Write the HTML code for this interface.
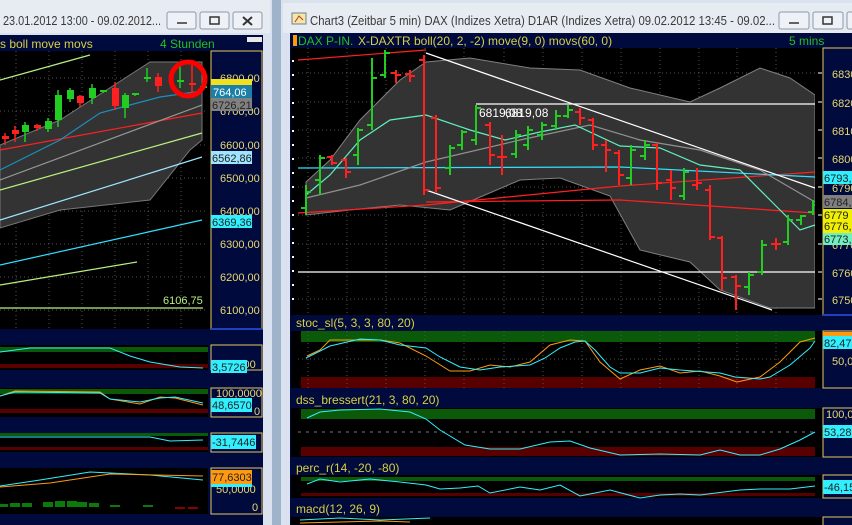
<!DOCTYPE html>
<html><head><meta charset="utf-8"><style>
html,body{margin:0;padding:0;background:#cfd9e6;overflow:hidden;width:852px;height:525px}
svg{display:block;font-family:"Liberation Sans",sans-serif}
</style></head><body>
<svg width="852" height="525" viewBox="0 0 852 525" xmlns="http://www.w3.org/2000/svg">
<rect x="0" y="0" width="272" height="525" fill="#d9e2ee"/>
<rect x="272" y="0" width="9" height="525" fill="#9fb3cb"/>
<rect x="281" y="0" width="571" height="525" fill="#d9e2ee"/>
<rect x="0" y="0" width="270" height="33" fill="#e7ecf3"/>
<rect x="283" y="3" width="569" height="30" fill="#e7ecf3"/>
<text x="3" y="25" font-size="13" fill="#3a3a3a" textLength="158" lengthAdjust="spacingAndGlyphs">23.01.2012 13:00 - 09.02.2012...</text>
<g fill="#eef2f7" stroke="#8c98a8"><rect x="167" y="12" width="29" height="17" rx="2"/><rect x="200" y="12" width="29" height="17" rx="2"/><rect x="233" y="12" width="29" height="17" rx="2"/>
<rect x="779" y="12" width="30" height="17" rx="2"/><rect x="813" y="12" width="30" height="17" rx="2"/><rect x="847" y="12" width="20" height="17" rx="2"/></g>
<g stroke="#333" fill="none" stroke-width="1.5"><path d="M177 23H187"/><rect x="210" y="17" width="9" height="7"/><path d="M243 17L252 25M252 17L243 25" stroke-width="2"/><path d="M789 23H799"/><rect x="823" y="17" width="9" height="7"/></g>
<rect x="292" y="13" width="14" height="11" fill="#f5e6a0" stroke="#6a7ea0"/><path d="M295 22L299 16L303 20" stroke="#c03030" fill="none"/>
<text x="310" y="25" font-size="13" fill="#3a3a3a" textLength="465" lengthAdjust="spacingAndGlyphs">Chart3 (Zeitbar 5 min)  DAX (Indizes Xetra) D1AR (Indizes Xetra) 09.02.2012 13:45 - 09.02...</text>

<rect x="0" y="35" width="263" height="490" fill="#000a3c"/>
<text x="0" y="48" font-size="12" fill="#d8d040">s boll move movs</text>
<text x="160" y="48" font-size="12" fill="#22c022">4 Stunden</text>
<rect x="247" y="37" width="15" height="5" fill="#e8e8e8"/>
<rect x="0" y="51" width="211" height="278" fill="#000"/>
<g stroke="#555" stroke-dasharray="1,3"><path d="M16 51V329M49 51V329M82 51V329M115 51V329M148 51V329M181 51V329M0 78H205M0 111H205M0 145H205M0 178H205M0 211H205M0 244H205M0 277H205M0 310H205"/></g>
<path d="M0 145L60 120L150 62L202 62V140L190 150L150 200L60 210L0 228Z" fill="#333" stroke="#777"/>
<g fill="none" stroke-width="1.2">
<path d="M0 80L90 55" stroke="#b8f080"/>
<path d="M0 150L202 113" stroke="#ff2020"/>
<path d="M0 190L202 133" stroke="#b8f080"/>
<path d="M0 180L202 105" stroke="#999"/>
<path d="M0 220L202 157" stroke="#9ee6ff"/>
<path d="M0 265L202 220" stroke="#30e0ff"/>
<path d="M0 285L137 262" stroke="#b8f080"/>
<path d="M0 170L60 140L100 113L160 97L202 91" stroke="#1a90c0"/>
<path d="M0 308H203" stroke="#b8f080"/>
</g>
<text x="163" y="304" font-size="11" fill="#b8f080">6106,75</text>
<g stroke="#22cc22" stroke-width="1.5"><path d="M25 122V142M48 118V132M58 90V127M70 88V102M92 84V104M103 90V93M125 93V118M135 93V96M147 68V82M180 65V88M203 86V89"/></g>
<g fill="#22cc22"><rect x="22" y="125" width="7" height="7"/><rect x="45" y="121" width="7" height="8"/><rect x="55" y="95" width="7" height="25"/><rect x="67" y="90" width="7" height="9"/><rect x="89" y="88" width="7" height="10"/><rect x="100" y="90" width="7" height="2"/><rect x="122" y="95" width="7" height="13"/><rect x="132" y="93" width="7" height="2"/><rect x="144" y="77" width="7" height="2"/><rect x="177" y="80" width="7" height="2"/><rect x="200" y="86" width="7" height="2"/></g>
<g stroke="#ff2020" stroke-width="1.5"><path d="M5 133V145M15 126V142M37 124V131M80 95V107M115 82V110M158 73V92M192 65V97"/></g>
<g fill="#ff2020"><rect x="2" y="136" width="7" height="3"/><rect x="12" y="130" width="7" height="4"/><rect x="34" y="125" width="7" height="3"/><rect x="77" y="96" width="7" height="7"/><rect x="112" y="88" width="7" height="18"/><rect x="155" y="77" width="7" height="9"/><rect x="189" y="83" width="7" height="2"/></g>
<circle cx="188" cy="79" r="17" fill="none" stroke="#ff0000" stroke-width="5"/>
<rect x="211" y="51" width="51" height="278" fill="#000a3c" stroke="#e8c860"/>
<path d="M211 329H262" stroke="#2040c0" stroke-width="2"/>
<g font-size="11" fill="#e8d870"><text x="220" y="82">6800,00</text><text x="220" y="115">6700,00</text><text x="220" y="149">6600,00</text><text x="220" y="182">6500,00</text><text x="220" y="215">6400,00</text><text x="220" y="248">6300,00</text><text x="220" y="281">6200,00</text><text x="220" y="314">6100,00</text></g>
<rect x="211" y="79" width="41" height="6" fill="#f0e020"/>
<rect x="211" y="85" width="41" height="13" fill="#1a80a8"/><text x="213" y="96" font-size="11" fill="#fff">764,06</text>
<rect x="211" y="98" width="41" height="13" fill="#808080"/><text x="212" y="109" font-size="11" fill="#222">6726,21</text>
<rect x="211" y="151" width="41" height="13" fill="#9ee6ff"/><text x="212" y="162" font-size="11" fill="#222">6562,86</text>
<rect x="211" y="215" width="41" height="13" fill="#30f0ff"/><text x="212" y="226" font-size="11" fill="#222">6369,36</text>
<rect x="0" y="345" width="208" height="25" fill="#000"/>
<rect x="0" y="347" width="208" height="5" fill="#0a5a0a"/><rect x="0" y="364" width="208" height="4" fill="#580000"/>
<path d="M0 352L30 348L110 348L130 356L150 362L180 367L203 368" stroke="#30f0ff" fill="none"/>
<rect x="211" y="345" width="51" height="25" fill="#000a3c" stroke="#e8c860"/>
<text x="216" y="368" font-size="11" fill="#e8d870">50,0000</text>
<rect x="211" y="360" width="36" height="13" fill="#30f0ff"/><text x="212" y="371" font-size="11" fill="#222">3,5726</text>

<rect x="0" y="388" width="208" height="29" fill="#000"/>
<rect x="0" y="389" width="208" height="5" fill="#0a5a0a"/><rect x="0" y="409" width="208" height="4" fill="#580000"/>
<path d="M0 396L15 391L100 392L110 399L140 404L160 397L175 398L203 405" stroke="#ff9a10" fill="none"/>
<path d="M0 396L15 392L100 393L110 399L140 402L160 398L175 397L203 403" stroke="#30f0ff" fill="none"/>
<rect x="211" y="388" width="51" height="29" fill="#000a3c" stroke="#e8c860"/>
<text x="216" y="397" font-size="11" fill="#e8d870">100,0000</text><text x="254" y="415" font-size="11" fill="#e8d870">0</text>
<rect x="211" y="398" width="41" height="14" fill="#30f0ff"/><text x="212" y="409" font-size="11" fill="#222">48,6570</text>

<rect x="0" y="433" width="208" height="19" fill="#000"/>
<rect x="0" y="433" width="208" height="3" fill="#0a5a0a"/><rect x="0" y="447" width="208" height="3" fill="#580000"/>
<path d="M0 437L150 437L170 441L203 440" stroke="#30f0ff" fill="none"/>
<rect x="211" y="433" width="51" height="19" fill="#000a3c" stroke="#e8c860"/>
<rect x="211" y="435" width="45" height="14" fill="#30f0ff"/><text x="212" y="446" font-size="11" fill="#222">-31,7446</text>

<rect x="0" y="468" width="208" height="46" fill="#000"/>
<path d="M0 486L40 480L90 472L150 475L203 480" stroke="#30f0ff" fill="none"/>
<path d="M0 487L50 483L110 474L203 476" stroke="#ff9a10" fill="none"/>
<g fill="#0a7a0a"><rect x="0" y="504" width="8" height="3"/><rect x="10" y="503" width="10" height="4"/><rect x="22" y="503" width="10" height="4"/><rect x="43" y="502" width="10" height="5"/><rect x="55" y="501" width="10" height="6"/><rect x="67" y="501" width="10" height="6"/><rect x="77" y="502" width="10" height="5"/><rect x="89" y="503" width="10" height="4"/><rect x="110" y="505" width="10" height="2"/><rect x="143" y="505" width="10" height="2"/></g>
<g fill="#8a0000"><rect x="175" y="507" width="10" height="2"/><rect x="188" y="507" width="10" height="2"/></g>
<rect x="211" y="468" width="51" height="46" fill="#000a3c" stroke="#e8c860"/>
<text x="216" y="493" font-size="11" fill="#e8d870">50,0000</text><text x="252" y="511" font-size="11" fill="#e8d870">0</text>
<rect x="211" y="470" width="41" height="14" fill="#ff9a10"/><text x="212" y="481" font-size="11" fill="#222">77,6303</text>
<rect x="211" y="484" width="41" height="3" fill="#30f0ff"/>

<rect x="290" y="33" width="562" height="492" fill="#000a3c"/>
<rect x="293" y="35" width="4" height="11" fill="#ff9a10"/>
<text x="298" y="45" font-size="12" fill="#22c022">DAX P-IN.</text>
<text x="358" y="45" font-size="12" fill="#d8d040">X-DAXTR boll(20, 2, -2) move(9, 0) movs(60, 0)</text>
<text x="789" y="45" font-size="12" fill="#22c022">5 mins</text>
<rect x="291" y="48" width="531" height="267" fill="#000"/>
<g stroke="#555" stroke-dasharray="1,3"><path d="M308 48V315M347 48V315M386 48V315M425 48V315M464 48V315M504 48V315M543 48V315M582 48V315M621 48V315M660 48V315M699 48V315M737 48V315M776 48V315M298 73H815M298 102H815M298 130H815M298 158H815M298 187H815M298 215H815M298 244H815M298 299H815"/></g>
<g fill="#000" stroke="#fff" stroke-width="2"><path d="M293 60V310" stroke-dasharray="2,12"/></g>
<path d="M306 182L330 160L360 120L400 80L426 62L470 58L530 68L580 70L630 88L690 102L720 88L760 68L790 78L815 95V308L770 308L720 290L690 262L640 250L610 196L560 178L520 180L450 210L400 205L350 210L306 215Z" fill="#333" stroke="#808080"/>
<g fill="none" stroke-width="1.2">
<path d="M298 60L426 50" stroke="#ff2020"/>
<path d="M298 213L426 205L620 186L815 172" stroke="#ff2020"/>
<path d="M426 202L620 200L815 213" stroke="#ff2020"/>
<path d="M298 168L620 167L815 177" stroke="#30e0ff"/>
<path d="M306 198L360 185L426 162L520 140L590 125L640 140L700 150L760 170L815 202" stroke="#909090"/>
<path d="M306 195L330 175L360 140L390 120L426 115L470 130L505 140L540 132L575 125L620 146L660 148L700 165L740 170L770 200L800 230L815 225" stroke="#60f0c0"/>
<path d="M426 53L815 188" stroke="#fff"/>
<path d="M426 190L772 310" stroke="#fff"/>
<path d="M476 104H815" stroke="#fff"/>
<path d="M298 272H815" stroke="#fff"/>
</g>
<text x="479" y="117" font-size="12" fill="#fff">6819,08</text><text x="505" y="117" font-size="12" fill="#fff">6819,08</text>
<g stroke="#22cc22" stroke-width="2" fill="none"><path d="M306 185V215M301 208H306M306 192H311M320 155V195M315 180H320M320 158H325M358 128V165M353 155H358M358 130H363M372 58V130M367 125H372M372 78H377M385 50V78M380 75H385M385 53H390M450 145V175M445 168H450M450 148H455M462 130V150M457 145H462M462 132H467M476 105V145M471 140H476M476 108H481M516 130V158M511 154H516M516 135H521M528 126V150M523 145H528M528 130H533M542 122V140M537 135H542M542 125H547M556 110V130M551 126H556M556 116H561M568 105V118M563 116H568M568 110H573M631 145V185M626 178H631M631 150H636M645 140V160M640 156H645M645 145H650M684 168V200M679 196H684M684 172H689M749 272V295M744 287H749M749 275H754M762 240V275M757 272H762M762 245H767M788 215V245M783 242H788M788 220H793M801 215V225M796 220H801M801 216H806M813 200V215M808 212H813M813 205H818"/></g>
<g stroke="#ff2020" stroke-width="2" fill="none"><path d="M332 155V165M327 157H332M332 163H337M346 158V178M341 160H346M346 172H351M396 70V83M391 73H396M396 75H401M410 70V82M405 74H410M410 76H415M424 55V195M419 60H424M424 190H429M436 115V193M431 118H436M436 188H441M490 122V165M485 125H490M490 155H495M502 135V175M497 157H502M502 157H507M580 108V125M575 112H580M580 118H585M593 118V150M588 120H593M593 145H598M606 140V172M601 145H606M606 150H611M619 150V185M614 153H619M619 175H624M657 143V190M652 145H657M657 183H662M671 170V200M666 180H671M671 188H676M697 168V190M692 185H697M697 183H702M710 185V240M705 190H710M710 237H715M722 236V290M717 238H722M722 278H727M736 275V310M731 277H736M736 286H741M776 240V248M771 244H781M776 238V250"/></g>
<rect x="815" y="48" width="8" height="267" fill="#000"/>
<g stroke="#fff" stroke-width="1"><path d="M818 73H822M818 102H822M818 130H822M818 158H822M818 187H822M818 215H822M818 244H822M818 272H822M818 299H822"/></g>
<rect x="823" y="48" width="30" height="267" fill="#000a3c" stroke="#e8c860"/>
<path d="M823 315H852" stroke="#2040c0" stroke-width="2"/>
<g font-size="11" fill="#e8d870"><text x="832" y="78">6830</text><text x="832" y="107">6820</text><text x="832" y="135">6810</text><text x="832" y="163">6800</text><text x="832" y="192">6790</text><text x="832" y="249">6770</text><text x="832" y="277">6760</text><text x="832" y="304">6750</text></g>
<rect x="823" y="171" width="29" height="13" fill="#30f0ff"/><text x="824" y="182" font-size="11" fill="#222">6793,</text>
<rect x="823" y="195" width="29" height="13" fill="#808080"/><text x="824" y="206" font-size="11" fill="#222">6784,</text>
<rect x="823" y="209" width="29" height="24" fill="#f0f000"/><text x="824" y="219" font-size="11" fill="#222">6779</text><text x="824" y="230" font-size="11" fill="#222">6776,</text>
<rect x="823" y="233" width="29" height="12" fill="#70f0c0"/><text x="824" y="243" font-size="11" fill="#222">6773,</text>
<text x="296" y="327" font-size="12" fill="#d8d040">stoc_sl(5, 3, 3, 80, 20)</text>
<rect x="291" y="331" width="532" height="57" fill="#000"/>
<rect x="301" y="331" width="514" height="11" fill="#0a5a0a"/><rect x="301" y="377" width="514" height="11" fill="#580000"/>
<g stroke="#555" stroke-dasharray="1,3"><path d="M308 331V388M347 331V388M386 331V388M425 331V388M464 331V388M504 331V388M543 331V388M582 331V388M621 331V388M660 331V388M699 331V388M737 331V388M776 331V388M298 359H815"/></g>
<path d="M307 356L320 350L330 340L380 340L400 343L426 356L450 371L470 371L490 365L510 367L530 362L550 345L570 340L585 341L600 362L620 379L640 370L660 366L680 373L700 371L720 376L737 382L760 377L780 362L800 342L815 338" stroke="#ff9a10" fill="none"/>
<path d="M306 358L330 346L360 339L380 340L400 345L426 348L440 357L460 367L480 370L500 367L530 365L545 358L560 348L575 342L585 341L595 350L610 367L620 373L640 373L660 368L680 370L720 373L735 377L760 379L770 377L790 365L810 348L815 341" stroke="#30f0ff" fill="none"/>
<rect x="823" y="331" width="30" height="57" fill="#000a3c" stroke="#e8c860"/>
<rect x="823" y="332" width="29" height="4" fill="#ff9a10"/>
<rect x="823" y="336" width="29" height="13" fill="#30f0ff"/><text x="824" y="347" font-size="11" fill="#222">82,47</text>
<text x="832" y="365" font-size="11" fill="#e8d870">50,0</text>

<text x="296" y="404" font-size="12" fill="#d8d040">dss_bressert(21, 3, 80, 20)</text>
<rect x="291" y="408" width="532" height="49" fill="#000"/>
<rect x="301" y="409" width="514" height="10" fill="#0a5a0a"/><rect x="301" y="447" width="514" height="9" fill="#580000"/>
<path d="M298 432H815" stroke="#777" stroke-dasharray="3,5"/>
<path d="M307 418L320 412L340 410L380 409L410 412L426 419L440 430L465 445L490 449L520 449L550 442L570 441L590 448L620 455L660 454L700 455L720 450L740 455L760 455L780 449L800 440L815 432" stroke="#30f0ff" fill="none"/>
<rect x="823" y="408" width="30" height="49" fill="#000a3c" stroke="#e8c860"/>
<text x="826" y="418" font-size="11" fill="#e8d870">100,0</text>
<rect x="823" y="425" width="29" height="13" fill="#30f0ff"/><text x="824" y="436" font-size="11" fill="#222">53,28</text>

<text x="296" y="472" font-size="12" fill="#d8d040">perc_r(14, -20, -80)</text>
<rect x="291" y="475" width="532" height="23" fill="#000"/>
<rect x="301" y="477" width="514" height="4" fill="#0a5a0a"/><rect x="301" y="493" width="514" height="3" fill="#580000"/>
<path d="M307 484L320 479L340 482L370 479L400 482L426 485L440 489L460 488L478 486L490 493L520 487L540 490L560 485L580 496L610 490L640 498L660 495L680 494L700 495L740 490L760 489L790 489L815 486" stroke="#30f0ff" fill="none"/>
<rect x="823" y="475" width="30" height="23" fill="#000a3c" stroke="#e8c860"/>
<rect x="823" y="480" width="29" height="14" fill="#30f0ff"/><text x="824" y="491" font-size="11" fill="#222">-46,15</text>

<text x="296" y="513" font-size="12" fill="#d8d040">macd(12, 26, 9)</text>
<rect x="291" y="517" width="532" height="8" fill="#000"/>
<path d="M300 520L340 518L380 520L430 518" stroke="#30f0ff" fill="none"/>
<path d="M300 523L380 521L410 522" stroke="#ff9a10" fill="none"/>
<rect x="823" y="517" width="30" height="9" fill="#000a3c" stroke="#e8c860"/>
</svg>
</body></html>
